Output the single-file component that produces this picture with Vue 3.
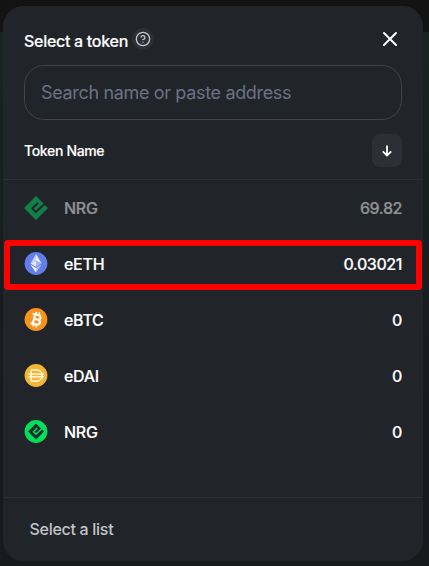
<script setup>
const tokens = [
  { icon: 'nrg', name: 'NRG', balance: '69.82', disabled: true },
  { icon: 'eth', name: 'eETH', balance: '0.03021', highlighted: true },
  { icon: 'btc', name: 'eBTC', balance: '0' },
  { icon: 'dai', name: 'eDAI', balance: '0' },
  { icon: 'nrgRound', name: 'NRG', balance: '0' },
]
</script>

<template>
  <div class="page">
    <div class="modal">
      <header class="top">
        <div class="title-row">
          <span class="title">Select a token</span>
          <span class="help">
            <svg width="16" height="16" viewBox="0 0 24 24" fill="none" stroke="#c3c5cb" stroke-width="2" stroke-linecap="round" stroke-linejoin="round">
              <circle cx="12" cy="12" r="10" />
              <path d="M9.09 9a3 3 0 0 1 5.83 1c0 2-3 3-3 3" />
              <path d="M12 17h.01" />
            </svg>
          </span>
          <svg class="close" width="24" height="24" viewBox="0 0 24 24" fill="none" stroke="#fff" stroke-width="2" stroke-linecap="round">
            <path d="M18 6L6 18M6 6l12 12" />
          </svg>
        </div>
        <input class="search" type="text" placeholder="Search name or paste address" />
        <div class="sort-row">
          <span class="label">Token Name</span>
          <span class="sort">
            <svg width="10" height="12" viewBox="0 0 10 12" fill="none" stroke="#fff" stroke-width="1.8">
              <path d="M5 .5v10M.8 6.3L5 10.5l4.2-4.2" />
            </svg>
          </span>
        </div>
      </header>

      <ul class="list">
        <li v-for="(t, i) in tokens" :key="i" class="row" :class="{ disabled: t.disabled, highlighted: t.highlighted }">
          <svg v-if="t.icon === 'nrg'" class="logo" width="24" height="24" viewBox="0 0 24 24">
            <path fill="#00d968" d="M12 0L24 12L12 24L0 12Z" />
            <path fill="none" stroke="#212429" stroke-width="2" stroke-linejoin="round" d="M14 7L8.2 12.4L11.8 16L21.2 7.4" />
          </svg>
          <svg v-else class="logo" width="24" height="24" viewBox="0 0.5 24 24">
            <template v-if="t.icon === 'eth'">
              <circle cx="12" cy="12" r="11.4" fill="#627eea" />
              <path fill="#c5d0f8" d="M12 2.6L6.4 12L12 9.6Z" />
              <path fill="#fff" d="M12 2.6L17.6 12L12 9.6Z" opacity=".85" />
              <path fill="#e5eafc" d="M6.4 12L12 9.6V15.3Z" />
              <path fill="#a5b4ee" d="M17.6 12L12 9.6V15.3Z" />
              <path fill="#fff" d="M6.4 13.1L12 16.4V21Z" />
              <path fill="#b8c5f4" d="M17.6 13.1L12 16.4V21Z" />
            </template>
            <template v-else-if="t.icon === 'btc'">
              <circle cx="12" cy="12" r="11.4" fill="#f7931a" />
              <g transform="rotate(13 12 12)" fill="none" stroke="#fff" stroke-width="2.1">
                <path d="M7.4 7.2H13.1C17 7.2 17 11.8 13.1 11.8H10.2M13.1 11.8C17.8 11.8 17.6 16.8 13.3 16.8H7.4M9.9 7.2V16.8" />
                <path stroke-width="1.6" d="M10.8 4.4V7.5M13.8 4.4V7.5M10.8 16.5V19.6M13.8 16.5V19.6" />
              </g>
            </template>
            <template v-else-if="t.icon === 'dai'">
              <circle cx="12" cy="12" r="11.4" fill="#f4b731" />
              <path fill="none" stroke="#fff" stroke-width="1.3" d="M7.2 6.3H11.8C20.3 6.3 20.3 17.7 11.8 17.7H7.2V6.3M4.5 10.6H19.8M4.5 13.4H19.8" />
            </template>
            <template v-else>
              <circle cx="12" cy="12" r="11.4" fill="#00e05b" />
              <path fill="#18302d" d="M12 4L20 12L12 20L4 12Z" />
              <path fill="none" stroke="#00e05b" stroke-width="1.4" d="M13.3 8.6L9.4 12.3L11.9 14.7L18.3 8.8" />
            </template>
          </svg>
          <span class="name">{{ t.name }}</span>
          <span class="balance">{{ t.balance }}</span>
        </li>
      </ul>

      <footer class="footer">Select a list</footer>
    </div>
  </div>
</template>

<style>
body {
  background: #18191d;
}
</style>

<style scoped>
.page {
  box-sizing: border-box;
  height: 566px;
  padding: 6px 6px 5px 3px;
  background: linear-gradient(#131313 32px, #192321 32px, #18201f 180px, #18191d 400px);
  font-family: Inter, "Liberation Sans", sans-serif;
  font-size: 16px;
  font-weight: 500;
  letter-spacing: -0.018em;
  color: #fff;
}
.modal {
  box-sizing: border-box;
  display: flex;
  flex-direction: column;
  height: 555px;
  border: 1px solid #212429;
  border-radius: 20px;
  background: #212429;
  overflow: hidden;
}
.top {
  box-sizing: border-box;
  height: 173px;
  padding: 20px 20px 0;
  border-bottom: 1px solid #2c2f36;
}
.title-row {
  display: flex;
  align-items: center;
  height: 24px;
}
.title {
  padding-top: 4px;
}
.title,
.label,
.name,
.balance {
  -webkit-text-stroke: 0.15px currentColor;
}
.help {
  display: flex;
  padding: 3px;
  margin-left: 4px;
  border-radius: 50%;
  background: #2c2f36;
}
.close {
  margin-left: auto;
}
.search {
  box-sizing: border-box;
  display: block;
  width: 378px;
  height: 55px;
  margin-top: 14px;
  padding: 0 16px;
  border: 1px solid #40444f;
  border-radius: 20px;
  outline: none;
  background: none;
  color: #fff;
  font-family: inherit;
  font-size: 18px;
  font-weight: 400;
  letter-spacing: -0.019em;
}
.search::placeholder {
  color: #6c7284;
  opacity: 1;
}
.sort-row {
  display: flex;
  align-items: center;
  justify-content: space-between;
  margin-top: 14px;
}
.label {
  font-size: 14px;
  letter-spacing: -0.024em;
}
.sort {
  display: flex;
  align-items: center;
  justify-content: center;
  width: 30px;
  height: 33px;
  border-radius: 8px;
  background: #2c2f36;
}
.list {
  flex: 1;
  margin: 0;
  padding: 0;
  list-style: none;
}
.row {
  box-sizing: border-box;
  display: flex;
  align-items: center;
  height: 56px;
  padding: 0 20px;
}
.row.disabled > * {
  opacity: 0.5;
}
.row.highlighted {
  height: 50px;
  margin: 4px 0 2px;
  padding: 0 14px 2px;
  border: 6px solid #f00;
  border-radius: 4px;
}
.logo {
  flex: none;
}
.name {
  margin-left: 16px;
}
.balance {
  margin-left: auto;
  letter-spacing: -0.026em;
}
.footer {
  box-sizing: border-box;
  height: 63px;
  padding: 21px 25.5px;
  border-top: 1px solid #2c2f36;
  color: #c3c5cb;
  line-height: 20px;
}
</style>
